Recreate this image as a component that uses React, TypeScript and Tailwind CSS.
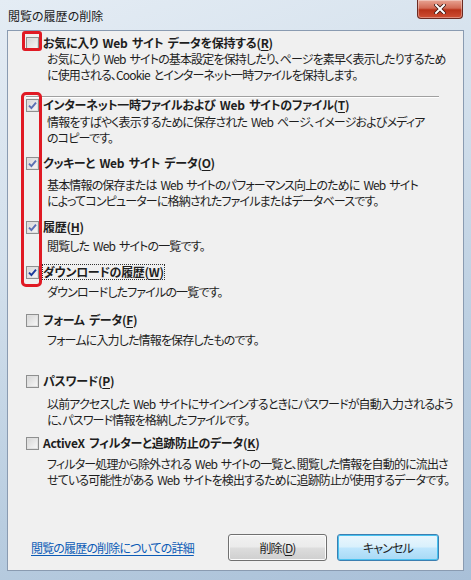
import type { ReactNode } from 'react'

// Win7 "閲覧の履歴の削除" dialog, mock only.

const FONT =
  "font-['Meiryo_UI','Noto_Sans_CJK_JP',sans-serif] [font-feature-settings:'palt'] tracking-[-0.85px] [word-spacing:2px]"

function CheckBox({ checked, tone = 'dark' }: { checked: boolean; tone?: 'dark' | 'light' }) {
  return (
    <span className="flex h-[13px] w-[13px] shrink-0 items-center justify-center border border-[#8e8f8f] bg-white">
      <span className="relative flex h-[11px] w-[11px] items-center justify-center border border-[#e0e0e0] bg-[linear-gradient(135deg,#d8d8d8,#f6f6f6)]">
        {checked && (
          <svg width="9" height="9" viewBox="0 0 9 9" className="absolute">
            <path
              d="M1 4.6 L3.4 7 L8 1.6"
              fill="none"
              stroke={tone === 'dark' ? '#1c3a9c' : '#5a6fb3'}
              strokeWidth="1.9"
            />
          </svg>
        )}
      </span>
    </span>
  )
}

function Key({ k }: { k: string }) {
  return <span className="underline underline-offset-2">{k}</span>
}

type Item = {
  label: ReactNode
  desc: string[]
  checked: boolean
  tone?: 'dark' | 'light'
  focus?: boolean
  mt: string
  dmt: string
}

const ITEMS: Item[] = [
  {
    label: <>インターネット一時ファイルおよび Web サイトのファイル(<Key k="T" />)</>,
    desc: ['情報をすばやく表示するために保存された Web ページ、イメージおよびメディア', 'のコピーです。'],
    checked: true,
    tone: 'light',
    mt: 'mt-[0px]',
    dmt: 'mt-[1px]',
  },
  {
    label: <>クッキーと Web サイト データ(<Key k="O" />)</>,
    desc: ['基本情報の保存または Web サイトのパフォーマンス向上のために Web サイト', 'によってコンピューターに格納されたファイルまたはデータベースです。'],
    checked: true,
    tone: 'light',
    mt: 'mt-[9px]',
    dmt: 'mt-[6px]',
  },
  {
    label: <>履歴(<Key k="H" />)</>,
    desc: ['閲覧した Web サイトの一覧です。'],
    checked: true,
    tone: 'light',
    mt: 'mt-[10px]',
    dmt: 'mt-[3px]',
  },
  {
    label: <>ダウンロードの履歴(<Key k="W" />)</>,
    desc: ['ダウンロードしたファイルの一覧です。'],
    checked: true,
    focus: true,
    mt: 'mt-[10px]',
    dmt: 'mt-[4px]',
  },
  {
    label: <>フォーム データ(<Key k="F" />)</>,
    desc: ['フォームに入力した情報を保存したものです。'],
    checked: false,
    mt: 'mt-[12px]',
    dmt: 'mt-[4px]',
  },
  {
    label: <>パスワード(<Key k="P" />)</>,
    desc: ['以前アクセスした Web サイトにサインインするときにパスワードが自動入力されるよう', 'に、パスワード情報を格納したファイルです。'],
    checked: false,
    mt: 'mt-[25px]',
    dmt: 'mt-[7px]',
  },
  {
    label: <>ActiveX フィルターと追跡防止のデータ(<Key k="K" />)</>,
    desc: ['フィルター処理から除外される Web サイトの一覧と、閲覧した情報を自動的に流出さ', 'せている可能性がある Web サイトを検出するために追跡防止が使用するデータです。'],
    checked: false,
    mt: 'mt-[7px]',
    dmt: 'mt-[5px]',
  },
]

function Row({ item }: { item: Item }) {
  return (
    <div className={item.mt}>
      <div className="flex h-[16px] items-center gap-[4px]">
        <CheckBox checked={item.checked} tone={item.tone} />
        <span
          className={
            'font-bold leading-[14px] tracking-[-0.3px] ' +
            (item.focus ? 'outline-1 outline-dotted outline-[#333]' : '')
          }
        >
          {item.label}
        </span>
      </div>
      <div className={'ml-[21px] leading-[16px] ' + item.dmt}>
        {item.desc.map((line, i) => (
          <div key={i} className="whitespace-nowrap">
            {line}
          </div>
        ))}
      </div>
    </div>
  )
}

export default function App() {
  return (
    <div
      className={
        'relative flex h-[580px] w-[471px] flex-col overflow-hidden bg-[linear-gradient(160deg,#e4ecf4_0%,#d3e0ec_35%,#b9cde0_70%,#a9c0d8_100%)] text-[12px] text-[#1e1e1e] ' +
        FONT
      }
    >
      {/* title bar */}
      <div className="flex h-[30px] shrink-0 items-start justify-between pl-[8px] pr-[8px]">
        <span className="pt-[7px] leading-[18px] tracking-normal text-[#1a1a1a]">閲覧の履歴の削除</span>
        <button className="flex h-[19px] w-[46px] items-center justify-center rounded-b-[4px] border border-t-0 border-[#6b2a22] bg-[linear-gradient(#e8a493_0%,#d26a54_45%,#b83118_55%,#cf4f34_100%)] shadow-[inset_0_0_0_1px_rgba(255,255,255,0.35)]">
          <svg width="12" height="10" viewBox="0 0 12 10">
            <path d="M2 1 L10 9 M10 1 L2 9" stroke="#3b1510" strokeWidth="3.6" strokeLinecap="square" />
            <path d="M2 1 L10 9 M10 1 L2 9" stroke="#fff" strokeWidth="2" strokeLinecap="square" />
          </svg>
        </button>
      </div>

      {/* client area */}
      <div className="mx-[7px] mb-[9px] flex flex-1 flex-col border border-[#8a9bb1] bg-[#f0f0f0] pl-[18px] pr-[24px] pt-[4px] pb-[9px]">
        <div>
          <div className="flex h-[16px] items-center gap-[4px]">
            <CheckBox checked={false} />
            <span className="font-bold leading-[14px] tracking-[-0.3px]">
              お気に入り Web サイト データを保持する(<Key k="R" />)
            </span>
          </div>
          <div className="ml-[21px] leading-[16px]">
            <div className="whitespace-nowrap">お気に入り Web サイトの基本設定を保持したり、ページを素早く表示したりするため</div>
            <div className="whitespace-nowrap">に使用される、Cookie とインターネット一時ファイルを保持します。</div>
          </div>
        </div>

        <div className="mt-[13px] h-px bg-[#a0a0a0] shadow-[0_1px_0_#ffffff]" />

        {ITEMS.map((item, i) => (
          <Row key={i} item={item} />
        ))}

        <div className="mt-auto flex items-center">
          <a className="ml-[5px] cursor-pointer text-[#0b5bb6] underline underline-offset-2">
            閲覧の履歴の削除についての詳細
          </a>
          <div className="ml-auto flex gap-[10px]">
            <button className="h-[27px] w-[99px] rounded-[3px] border border-[#707070] bg-[linear-gradient(#f2f2f2_0%,#ebebeb_48%,#dddddd_52%,#cfcfcf_100%)] shadow-[inset_0_0_0_1px_#fcfcfc]">
              削除(<Key k="D" />)
            </button>
            <button className="h-[27px] w-[102px] rounded-[3px] border border-[#3c7fb1] bg-[linear-gradient(#eaf6fd_0%,#d9f0fc_48%,#bee6fd_52%,#a7d9f5_100%)] shadow-[inset_0_0_0_1px_#48c2f0]">
              キャンセル
            </button>
          </div>
        </div>
      </div>

      {/* red annotations */}
      <div className="pointer-events-none absolute left-[22px] top-[31px] h-[20px] w-[20px] rounded-[3px] border-[3px] border-[#e01a24]" />
      <div className="pointer-events-none absolute left-[21px] top-[92px] h-[195px] w-[21px] rounded-[5px] border-[3px] border-[#e01a24]" />
    </div>
  )
}
